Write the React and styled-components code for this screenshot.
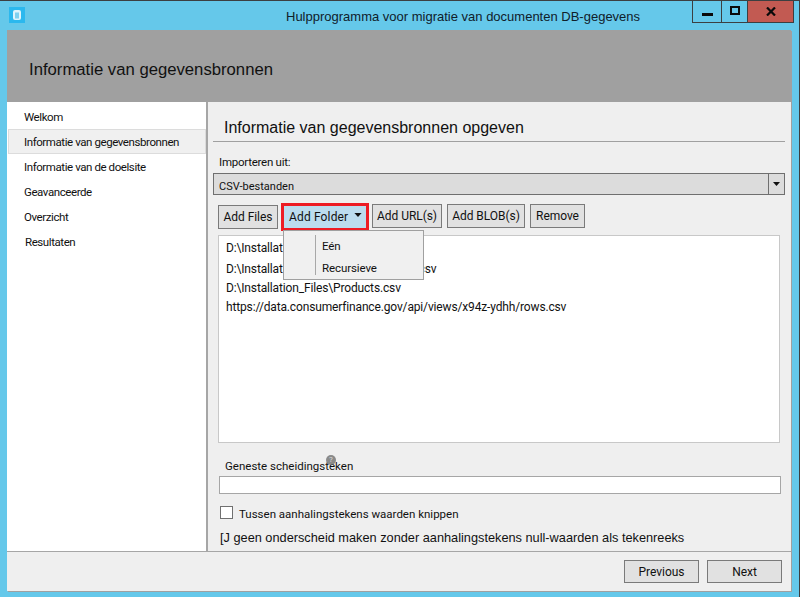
import React from "react";
import styled, { createGlobalStyle } from "styled-components";

const Global = createGlobalStyle`
  html, body {
    margin: 0;
    padding: 0;
    background: #65c8ea;
  }
  body {
    font-family: Roboto, "Liberation Sans", sans-serif;
    font-size: 12px;
    color: #111;
    overflow: hidden;
  }
`;

const Frame = styled.div`
  width: 800px;
  height: 597px;
  box-sizing: border-box;
  display: flex;
  flex-direction: column;
  background: #65c8ea;
  border-top: 1px solid #3c3f41;
  border-right: 1px solid #3c3f41;
`;

const TitleBar = styled.div`
  height: 29px;
  display: flex;
  align-items: flex-start;
  flex-shrink: 0;
`;

const AppIcon = styled.div`
  width: 16px;
  height: 16px;
  margin: 6px 0 0 9px;
  background: #2bb8ee;
  display: flex;
  align-items: center;
  justify-content: center;
`;

const Title = styled.div`
  margin: 8px 0 0 261px;
  width: 406px;
  font-family: "Liberation Sans", Arial, sans-serif;
  font-size: 13px;
  line-height: 16px;
  color: #10202a;
  white-space: nowrap;
`;

const Controls = styled.div`
  display: flex;
  height: 21px;
  border: 1px solid #3c3f41;
  border-top: none;
`;

const WinButton = styled.div`
  width: ${(p) => p.$w}px;
  display: flex;
  align-items: center;
  justify-content: center;
  background: ${(p) => (p.$close ? "#c25a52" : "transparent")};
  border-left: ${(p) => (p.$first ? "none" : "1px solid #3c3f41")};
  box-sizing: border-box;
`;

const Client = styled.div`
  width: 784px;
  height: 561px;
  margin-left: 7px;
  display: flex;
  flex-direction: column;
  background: #efefef;
  box-shadow: 1px 1px 0 #a0a0a0;
`;

const Banner = styled.div`
  height: 72px;
  flex-shrink: 0;
  background: #a0a0a0;
  display: flex;
  align-items: center;
  padding-left: 22px;
  padding-top: 8px;
  box-sizing: border-box;
  font-family: "Liberation Sans", Arial, sans-serif;
  font-size: 16.7px;
  color: #111;
`;

const Body = styled.div`
  flex: 1;
  display: flex;
  min-height: 0;
`;

const Sidebar = styled.ul`
  width: 198px;
  flex-shrink: 0;
  margin: 0;
  padding: 2px 0 0 1px;
  list-style: none;
  background: #fff;
  border-right: 2px solid #a6a6a6;
`;

const NavItem = styled.li`
  height: 25px;
  width: 198px;
  box-sizing: border-box;
  display: flex;
  align-items: center;
  padding-left: ${(p) => (p.$shift ? 16 : 15)}px;
  font-size: 11.5px;
  letter-spacing: -0.42px;
  background: ${(p) => (p.$active ? "#f0f0f0" : "transparent")};
  border: 1px solid ${(p) => (p.$active ? "#dcdcdc" : "transparent")};
`;

const Panel = styled.main`
  flex: 1;
  min-width: 0;
  padding: 0 6px 0 5px;
  display: flex;
  flex-direction: column;
`;

const Heading = styled.h1`
  margin: 0;
  height: 40px;
  padding: 15px 0 0 11px;
  box-sizing: border-box;
  font-family: "Liberation Sans", Arial, sans-serif;
  font-size: 16px;
  line-height: 22px;
  font-weight: 400;
  border-bottom: 1px solid #a0a0a0;
`;

const FieldLabel = styled.div`
  margin: 12px 0 0 6px;
  line-height: 16px;
  font-size: 11.5px;
  letter-spacing: -0.25px;
`;

const Combo = styled.div`
  margin-top: 3px;
  height: 22px;
  box-sizing: border-box;
  display: flex;
  background: #dcdcdc;
  border: 1px solid #6f6f6f;
`;

const ComboText = styled.div`
  flex: 1;
  padding: 5px 0 0 5px;
  font-size: 11px;
  line-height: 16px;
`;

const ComboArrow = styled.div`
  width: 15px;
  border-left: 1px solid #6f6f6f;
  display: flex;
  align-items: center;
  justify-content: center;
`;

const Toolbar = styled.div`
  position: relative;
  height: 31px;
  margin: 9px 0 0 5px;
  display: flex;
  align-items: flex-start;
`;

const Button = styled.div`
  box-sizing: border-box;
  width: ${(p) => p.$w}px;
  height: 24px;
  margin-left: ${(p) => p.$gap || 0}px;
  margin-top: ${(p) => p.$top || 0}px;
  display: flex;
  align-items: center;
  justify-content: center;
  background: #e1e1e1;
  border: 1px solid #7a7a7a;
  white-space: nowrap;
  letter-spacing: -0.05px;
`;

const FolderButton = styled.div`
  box-sizing: border-box;
  width: 88px;
  height: 28px;
  margin: -1px 0 0 3px;
  padding: 0 0 0 5px;
  display: flex;
  align-items: center;
  gap: 6px;
  background: #bcdcee;
  border: 3px solid #ed1c24;
  white-space: nowrap;
  letter-spacing: 0.15px;
`;

const FolderCaret = styled.span`
  display: flex;
  margin-top: -4px;
`;

const Menu = styled.div`
  position: absolute;
  left: 65px;
  top: 26px;
  width: 141px;
  height: 50px;
  box-sizing: border-box;
  background: #f0f0f0;
  border: 1px solid #a0a0a0;
  display: flex;
  padding: 4px 0;
  z-index: 2;
`;

const MenuGutter = styled.div`
  width: 31px;
  border-right: 1px solid #a8a8a8;
  flex-shrink: 0;
`;

const MenuItems = styled.div`
  padding: 3px 0 0 6px;
  display: flex;
  flex-direction: column;
  gap: 6px;
  font-size: 11.5px;
  line-height: 16px;
  letter-spacing: -0.1px;
`;

const FileList = styled.div`
  margin: 0 5px;
  height: 208px;
  box-sizing: border-box;
  background: #fff;
  border: 1px solid #c8c8c8;
  padding: 3px 0 0 7px;
  letter-spacing: -0.15px;
`;

const FileRow = styled.div`
  height: ${(p) => p.$h}px;
  line-height: 19px;
  white-space: nowrap;
`;

const DelimiterLabel = styled.div`
  position: relative;
  margin: 15px 0 0 12px;
  line-height: 16px;
  font-size: 11.5px;
`;

const HelpDot = styled.span`
  position: absolute;
  left: 101px;
  top: -3px;
  width: 10px;
  height: 10px;
  border-radius: 50%;
  background: rgba(112, 112, 112, 0.8);
  color: #ddd;
  font-size: 8px;
  line-height: 10px;
  text-align: center;
`;

const TextInput = styled.div`
  margin: 2px 4px 0 6px;
  height: 18px;
  box-sizing: border-box;
  background: #fff;
  border: 1px solid #a6a6a6;
`;

const CheckRow = styled.label`
  margin: 10px 0 0 7px;
  display: flex;
  align-items: center;
  gap: 6px;
  height: 16px;
  font-size: 11.5px;
`;

const CheckText = styled.span`
  margin-top: 3px;
`;

const Box = styled.span`
  width: 13px;
  height: 13px;
  box-sizing: border-box;
  background: #fff;
  border: 1px solid #707070;
`;

const Note = styled.div`
  margin: 9px 0 0 7px;
  line-height: 18px;
  font-family: "Liberation Sans", Arial, sans-serif;
  font-size: 12.75px;
  white-space: nowrap;
`;

const Footer = styled.footer`
  height: 40px;
  flex-shrink: 0;
  box-sizing: border-box;
  border-top: 1px solid #a6a6a6;
  display: flex;
  justify-content: flex-end;
  align-items: flex-start;
  gap: 8px;
  padding: 8px 9px 0 0;
`;

const NavButton = styled(Button)`
  width: 75px;
  height: 23px;
`;

const FILES = [
  "D:\\Installation_Files\\Customers.csv",
  "D:\\Installation_Files\\Employees_Info.csv",
  "D:\\Installation_Files\\Products.csv",
  "https://data.consumerfinance.gov/api/views/x94z-ydhh/rows.csv",
];

const NAV = [
  "Welkom",
  "Informatie van gegevensbronnen",
  "Informatie van de doelsite",
  "Geavanceerde",
  "Overzicht",
  "Resultaten",
];

const Caret = ({ w = 9, h = 5, color = "#111" }) => (
  <svg width={w} height={h} viewBox="0 0 9 5">
    <path d="M0 0h9L4.5 5z" fill={color} />
  </svg>
);

export default function App() {
  return (
    <>
      <Global />
      <Frame>
        <TitleBar>
          <AppIcon>
            <svg width="10" height="12" viewBox="0 0 10 12">
              <rect x="1" y="1" width="8" height="10" rx="2" fill="#dff4fc" />
              <rect x="3" y="3.5" width="4" height="6" fill="#7fd0ef" />
            </svg>
          </AppIcon>
          <Title>Hulpprogramma voor migratie van documenten DB-gegevens</Title>
          <Controls>
            <WinButton $w={28} $first>
              <svg width="11" height="4" viewBox="0 0 11 4" style={{ marginTop: 6 }}>
                <rect width="11" height="3" fill="#0a0a0a" />
              </svg>
            </WinButton>
            <WinButton $w={26}>
              <svg width="10" height="9" viewBox="0 0 10 9" style={{ marginTop: -2 }}>
                <rect x="1" y="1" width="8" height="7" fill="none" stroke="#0a0a0a" strokeWidth="2" />
              </svg>
            </WinButton>
            <WinButton $w={46} $close>
              <svg width="10" height="9" viewBox="0 0 10 9">
                <path d="M1 .5l8 8M9 .5l-8 8" stroke="#0a0a0a" strokeWidth="2.2" />
              </svg>
            </WinButton>
          </Controls>
        </TitleBar>
        <Client>
          <Banner>Informatie van gegevensbronnen</Banner>
          <Body>
            <Sidebar>
              {NAV.map((label, i) => (
                <NavItem key={label} $active={i === 1} $shift={i === 5}>
                  {label}
                </NavItem>
              ))}
            </Sidebar>
            <Panel>
              <Heading>Informatie van gegevensbronnen opgeven</Heading>
              <FieldLabel>Importeren uit:</FieldLabel>
              <Combo>
                <ComboText>CSV-bestanden</ComboText>
                <ComboArrow>
                  <Caret w={7} h={4} />
                </ComboArrow>
              </Combo>
              <Toolbar>
                <Button $w={60} $top={1}>Add Files</Button>
                <FolderButton>
                  Add Folder
                  <FolderCaret>
                    <Caret w={8} h={4} />
                  </FolderCaret>
                </FolderButton>
                <Button $w={70} $gap={3}>Add URL(s)</Button>
                <Button $w={78} $gap={5}>Add BLOB(s)</Button>
                <Button $w={55} $gap={5}>Remove</Button>
                <Menu>
                  <MenuGutter />
                  <MenuItems>
                    <span>Eén</span>
                    <span>Recursieve</span>
                  </MenuItems>
                </Menu>
              </Toolbar>
              <FileList>
                {FILES.map((file, i) => (
                  <FileRow key={file} $h={i === 0 ? 21 : 19}>{file}</FileRow>
                ))}
              </FileList>
              <DelimiterLabel>
                Geneste scheidingsteken
                <HelpDot>?</HelpDot>
              </DelimiterLabel>
              <TextInput />
              <CheckRow>
                <Box />
                <CheckText>Tussen aanhalingstekens waarden knippen</CheckText>
              </CheckRow>
              <Note>[J geen onderscheid maken zonder aanhalingstekens null-waarden als tekenreeks</Note>
            </Panel>
          </Body>
          <Footer>
            <NavButton>Previous</NavButton>
            <NavButton>Next</NavButton>
          </Footer>
        </Client>
      </Frame>
    </>
  );
}
